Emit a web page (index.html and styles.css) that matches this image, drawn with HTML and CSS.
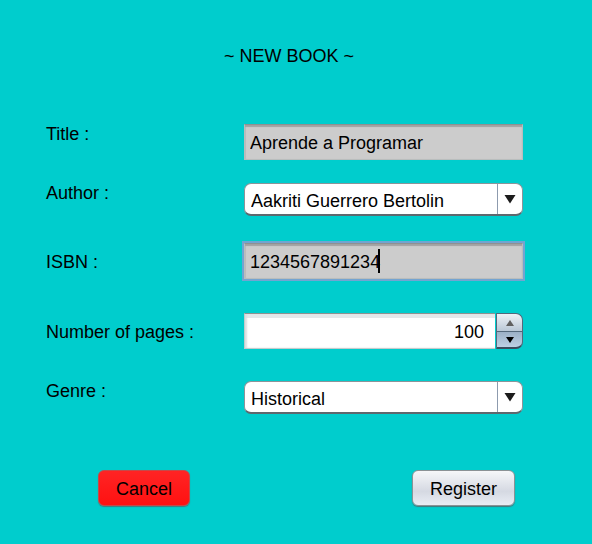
FILE: index.html
```html
<!DOCTYPE html>
<html lang="en">
<head>
<meta charset="utf-8">
<meta name="viewport" content="width=device-width, initial-scale=1">
<title>New book</title>
<link rel="stylesheet" href="styles.css">
</head>
<body>
<form class="book-form">
  <h1 class="heading">~ NEW BOOK ~</h1>
  <div class="fields">
    <label class="label" for="title">Title :</label>
    <input class="text-field" id="title" type="text" value="Aprende a Programar">

    <label class="label" for="author">Author :</label>
    <div class="combo">
      <select class="combo-select" id="author"><option>Aakriti Guerrero Bertolin</option></select>
      <svg class="combo-arrow" viewBox="0 0 12 10" aria-hidden="true"><path d="M0.5 1H11.5L6 9.5Z"/></svg>
    </div>

    <label class="label label-middle" for="isbn">ISBN :</label>
    <div class="focused">
      <input class="text-field" id="isbn" type="text" value="1234567891234">
      <span class="caret"></span>
    </div>

    <label class="label label-middle" for="pages">Number of pages :</label>
    <div class="spinner">
      <input class="spinner-input" id="pages" type="text" inputmode="numeric" value="100">
      <div class="spinner-buttons">
        <button class="step step-up" type="button" aria-label="Increase"><svg class="step-icon" viewBox="0 0 8 6"><path d="M4 0L8 6H0Z"/></svg></button>
        <button class="step step-down" type="button" aria-label="Decrease"><svg class="step-icon" viewBox="0 0 8 6"><path d="M0 0H8L4 6Z"/></svg></button>
      </div>
    </div>

    <label class="label" for="genre">Genre :</label>
    <div class="combo">
      <select class="combo-select" id="genre"><option>Historical</option></select>
      <svg class="combo-arrow" viewBox="0 0 12 10" aria-hidden="true"><path d="M0.5 1H11.5L6 9.5Z"/></svg>
    </div>
  </div>
  <div class="actions">
    <button class="button button-cancel" type="button">Cancel</button>
    <button class="button button-register" type="submit">Register</button>
  </div>
</form>
</body>
</html>
```

FILE: styles.css
```css
* {
  box-sizing: border-box;
}

body {
  margin: 0;
  min-height: 100vh;
  background: #00cdcd;
  color: #000;
  font: 18px/20px "Liberation Sans", Arial, sans-serif;
}

input,
select,
button {
  margin: 0;
  color: inherit;
  font: inherit;
}

.book-form {
  padding: 46px 69px 36px 46px;
}

.heading {
  margin: 0 0 58px;
  padding-left: 9px;
  font-size: 18px;
  font-weight: 400;
  text-align: center;
}

.fields {
  display: grid;
  grid-template-columns: 198px 1fr;
  grid-template-rows: 59px 60px 70px 68px auto;
  align-items: start;
}

.label-middle {
  line-height: 38px;
}

.text-field {
  display: block;
  width: 100%;
  height: 36px;
  padding: 2px 5px 0;
  border: 1px solid #b9bdbd;
  border-top-color: #8e9191;
  border-radius: 0;
  outline: none;
  background: #ccc;
  box-shadow: inset 0 2px 1px #a2a2a2, inset 1px 0 1px #bdbdbd;
}

.focused {
  position: relative;
  outline: 2px solid #73a4d1;
}

.caret {
  position: absolute;
  top: 6px;
  left: 134px;
  width: 2px;
  height: 24px;
  background: #000;
}

.combo {
  position: relative;
}

.combo-select {
  display: block;
  width: 100%;
  height: 33px;
  padding: 3px 32px 0 6px;
  border: 1px solid #8b9499;
  border-bottom: 2px solid #5e686e;
  border-radius: 7px;
  outline: none;
  appearance: none;
  background: linear-gradient(#8d9bae, #8d9bae) right 24px top / 1px 100% no-repeat #fff;
}

.combo-arrow {
  position: absolute;
  top: 11px;
  right: 7px;
  width: 12px;
  height: 10px;
  fill: #1c1c1c;
  pointer-events: none;
}

.spinner {
  display: flex;
  gap: 1px;
  height: 36px;
}

.spinner-input {
  flex: 1;
  min-width: 0;
  padding: 2px 11px 0 5px;
  border: 1px solid #c3cccc;
  border-top-color: #8e9191;
  border-right: 0;
  border-radius: 0;
  outline: none;
  background: linear-gradient(#e4e8ea, #e4e8ea) left top / 100% 4px no-repeat #fff;
  box-shadow: inset 2px 0 2px #dcdfe0;
  text-align: right;
}

.spinner-buttons {
  display: grid;
  grid-template-rows: 1fr 1fr;
  width: 27px;
}

.step {
  display: grid;
  place-items: center;
  padding: 0;
  border: 1px solid #53687b;
}

.step-up {
  border-bottom: 0;
  border-radius: 0 7px 0 0;
  background: linear-gradient(#eef2f6, #b9c7d6);
  fill: #606060;
}

.step-down {
  border-bottom: 2px solid #3b4d5e;
  border-radius: 0 0 7px 0;
  background: linear-gradient(#9bb0c6, #bdd0e3);
  fill: #000;
}

.step-icon {
  width: 8px;
  height: 6px;
}

.actions {
  display: flex;
  justify-content: space-between;
  margin-top: 56px;
  padding: 0 8px 0 52px;
}

.button {
  height: 36px;
  padding: 2px 17px 0;
  border: 1px solid #8b9295;
  border-radius: 6px;
  box-shadow: 0 1px 1px #47777b;
}

.button-cancel {
  border-color: #c34b4b;
  background: linear-gradient(#ff2424, #ff1111);
}

.button-register {
  background: linear-gradient(#f6f7f9, #d5d9e2 60%, #e9edf4);
}
```
